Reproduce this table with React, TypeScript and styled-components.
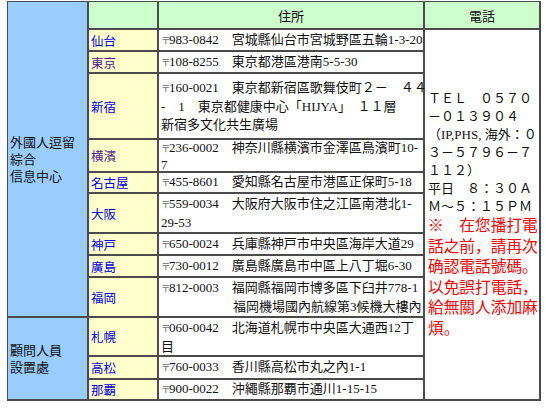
import React from 'react';
import styled, { createGlobalStyle } from 'styled-components';

const FONT = `"Liberation Serif", "Noto Sans CJK JP", serif`;

const Global = createGlobalStyle`
  html, body { margin: 0; padding: 0; background: #ffffff; }
  body { font-family: ${FONT}; color: #111; }
`;

const Page = styled.div`
  padding: 1px 0 0 7px;
`;

const Table = styled.div`
  display: grid;
  grid-template-columns: 79px 68px 264px 114px;
  grid-template-rows: 26px 20px 20px 64px 31px 19px 38px 20px 20px 38px 37px 21px 19px;
  gap: 2px;
  padding: 1px 2px 2px 1px;
  background: #4b4b4b;
  width: max-content;
`;

const Cell = styled.div<{ $row?: string; $col?: string }>`
  grid-row: ${(p) => p.$row ?? 'auto'};
  grid-column: ${(p) => p.$col ?? 'auto'};
  display: flex;
  flex-direction: column;
  justify-content: center;
  min-width: 0;
  white-space: nowrap;
`;

const RegionCell = styled(Cell)`
  background: #99ccff;
  font-size: 13px;
  line-height: 17px;
  padding: 0 2px;
`;

const HeadCell = styled(Cell)`
  background: #ccffcc;
  align-items: center;
  font-size: 13px;
`;

const CityCell = styled(Cell)`
  background: #ffffcc;
  font-size: 12.5px;
  padding: 0 2px;
`;

const CityLink = styled.a<{ $visited?: boolean }>`
  color: ${(p) => (p.$visited ? '#551a8b' : '#0000ee')};
  text-decoration: none;
`;

const AddrCell = styled(Cell)<{ $lh?: number }>`
  background: #ffffff;
  font-size: 13px;
  line-height: ${(p) => p.$lh ?? 17}px;
  padding: 0 2px;
`;

const Postal = styled.span`
  display: inline-block;
  width: 8px;
  font-size: 9.5px;
  color: #6a6a7a;
`;

const Indent = styled.span`
  padding-left: 72px;
`;

const PhoneCell = styled(Cell)`
  background: #ffffff;
  padding: 0 0 0 3px;
`;

const PhoneLine = styled.div`
  font-size: 13px;
  line-height: 18px;
`;

const WarnLine = styled.div`
  font-size: 15.7px;
  line-height: 20.5px;
  color: #ff0000;
`;

type Row = {
  city: string;
  visited?: boolean;
  code: string;
  lines: string[];
  indent?: boolean;
  lh?: number;
};

const rows: Row[] = [
  { city: '仙台', code: '983-0842', lines: ['宮城縣仙台市宮城野區五輪1-3-20'] },
  { city: '東京', visited: true, code: '108-8255', lines: ['東京都港區港南5-5-30'] },
  {
    city: '新宿',
    code: '160-0021',
    lines: ['東京都新宿區歌舞伎町２－　４４', '-　1　東京都健康中心「HIJYA」　１１層', '新宿多文化共生廣場'],
    lh: 18,
  },
  { city: '横濱', visited: true, code: '236-0002', lines: ['神奈川縣横濱市金澤區鳥濱町10-', '7'], lh: 15 },
  { city: '名古屋', code: '455-8601', lines: ['愛知縣名古屋市港區正保町5-18'] },
  { city: '大阪', code: '559-0034', lines: ['大阪府大阪市住之江區南港北1-', '29-53'] },
  { city: '神戸', code: '650-0024', lines: ['兵庫縣神戸市中央區海岸大道29'] },
  { city: '廣島', code: '730-0012', lines: ['廣島縣廣島市中區上八丁堀6-30'] },
  {
    city: '福岡',
    code: '812-0003',
    lines: ['福岡縣福岡市博多區下臼井778-1', '福岡機場國內航線第3候機大樓內'],
    indent: true,
  },
  { city: '札幌', code: '060-0042', lines: ['北海道札幌市中央區大通西12丁', '目'] },
  { city: '高松', code: '760-0033', lines: ['香川縣高松市丸之內1-1'] },
  { city: '那覇', code: '900-0022', lines: ['沖繩縣那覇市通川1-15-15'] },
];

const phoneLines = [
  'ＴＥＬ　０５７０',
  '－０１３９０４',
  '（IP,PHS, 海外：０',
  '３－５７９６－７',
  '１１２）',
  '平日　８：３０Ａ',
  'Ｍ～５：１５ＰＭ',
];

const warnLines = ['※　在您播打電', '話之前，請再次', '确認電話號碼。', '以免誤打電話，', '給無關人添加麻', '煩。'];

function Address({ row }: { row: Row }) {
  return (
    <>
      {row.lines.map((l, i) =>
        i === 0 ? (
          <div key={i}>
            <Postal>〒</Postal>
            {row.code}　{l}
          </div>
        ) : (
          <div key={i}>{row.indent ? <Indent>{l}</Indent> : l}</div>
        )
      )}
    </>
  );
}

export default function App() {
  return (
    <Page>
      <Global />
      <Table>
        <RegionCell $row="1 / span 10" $col="1">
          <div>外國人逗留</div>
          <div>綜合</div>
          <div>信息中心</div>
        </RegionCell>
        <HeadCell $col="2" />
        <HeadCell $col="3">住所</HeadCell>
        <HeadCell $col="4">電話</HeadCell>
        {rows.map((r, i) => (
          <React.Fragment key={r.city}>
            {i === 9 && (
              <RegionCell $row="11 / span 3" $col="1">
                <div>顧問人員</div>
                <div>設置處</div>
              </RegionCell>
            )}
            <CityCell $row={`${i + 2}`} $col="2">
              <CityLink href="#" $visited={r.visited}>
                {r.city}
              </CityLink>
            </CityCell>
            <AddrCell $row={`${i + 2}`} $col="3" $lh={r.lh}>
              <Address row={r} />
            </AddrCell>
            {i === 0 && (
              <PhoneCell $row="2 / span 12" $col="4">
                {phoneLines.map((l) => (
                  <PhoneLine key={l}>{l}</PhoneLine>
                ))}
                {warnLines.map((l) => (
                  <WarnLine key={l}>{l}</WarnLine>
                ))}
              </PhoneCell>
            )}
          </React.Fragment>
        ))}
      </Table>
    </Page>
  );
}
